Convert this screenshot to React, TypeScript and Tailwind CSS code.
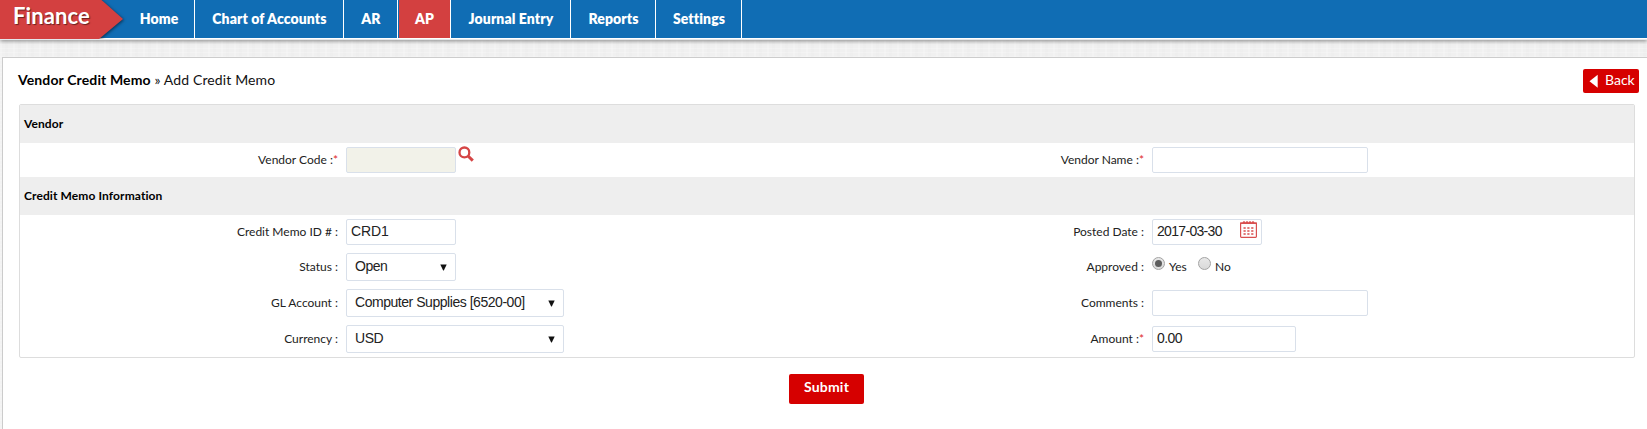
import type { ReactNode } from "react";

const navItems = [
  { label: "Home", width: "w-[72px]" },
  { label: "Chart of Accounts", width: "w-[149px]" },
  { label: "AR", width: "w-[54px]" },
  { label: "AP", width: "w-[53px]", active: true },
  { label: "Journal Entry", width: "w-[120px]" },
  { label: "Reports", width: "w-[85px]" },
  { label: "Settings", width: "w-[86px]" },
];

function Brand() {
  return (
    <div className="relative z-10 h-[39px] w-[123px] shrink-0">
      <svg className="absolute left-0 top-0 overflow-hidden" width="127" height="39">
        <path d="M0 -4H97L123 19L99 39H0Z" fill="#d34040" style={{ filter: "drop-shadow(1px 1px 1.5px rgba(0,0,0,.5))" }} />
      </svg>
      <span className="relative block pl-[13px] text-[22px] leading-[32px] font-bold tracking-[0.1px] text-white [text-shadow:1px_1px_1px_rgba(0,0,0,0.5)]">
        Finance
      </span>
    </div>
  );
}

function Nav() {
  return (
    <header className="relative flex h-[39px] border-b border-white bg-[#106db4] shadow-[0_1px_0_#e4e8ec,0_2px_4px_rgba(0,0,0,0.45)]">
      <Brand />
      {navItems.map((n) => (
        <a
          key={n.label}
          className={`${n.width} flex h-[38px] shrink-0 items-center justify-center border-r border-white pb-px pl-px text-[14px] font-extrabold tracking-[0.1px] whitespace-nowrap text-white ${n.active ? "bg-[#d34040] bg-clip-padding shadow-[inset_1px_0_0_#106db4]" : ""}`}
        >
          {n.label}
        </a>
      ))}
    </header>
  );
}

function Heading({ children }: { children: ReactNode }) {
  return (
    <h2 className="flex h-[38px] items-center bg-[#eeeeee] pb-px pl-1 text-[12px] font-bold tracking-[0.1px] text-black">
      {children}
    </h2>
  );
}

function Field({ label, required, children }: { label: string; required?: boolean; children: ReactNode }) {
  return (
    <div className="flex h-full w-[806px] gap-2">
      <div className="flex w-[318px] items-center justify-end pb-px text-[12px] whitespace-nowrap text-[#222]">
        <span>
          {label} :{required && <span className="text-[#e02b2b]">*</span>}
        </span>
      </div>
      <div className="flex items-start pt-1">{children}</div>
    </div>
  );
}

function Row({ short, children }: { short?: boolean; children: ReactNode }) {
  return <div className={`flex ${short ? "h-[34px]" : "h-9"}`}>{children}</div>;
}

function Input({ value, width, className = "" }: { value?: string; width: string; className?: string }) {
  return (
    <div
      className={`${width} flex h-[26px] items-center rounded-[2px] border border-[#d9e0ea] bg-white pb-0.5 pl-1 font-['Liberation_Sans',sans-serif] text-[14px] text-[#222] ${className}`}
    >
      {value}
    </div>
  );
}

function Select({ value, width }: { value: string; width: string }) {
  return (
    <div
      className={`${width} flex h-7 items-center justify-between rounded-[2px] border border-[#d9e0ea] bg-white pr-2 pb-0.5 pl-2 font-['Liberation_Sans',sans-serif] text-[14px] tracking-[-0.46px] whitespace-nowrap text-[#222]`}
    >
      {value}
      <svg width="7" height="7" viewBox="0 0 7 7" className="mt-0.5">
        <path d="M.3 .5H6.7L3.8 6.5H3.2Z" fill="#111" />
      </svg>
    </div>
  );
}

function SearchIcon() {
  return (
    <svg width="16" height="16" viewBox="0 0 16 16" className="-mt-px ml-0.5" fill="none" stroke="#d54545">
      <circle cx="6.4" cy="6.4" r="4.9" strokeWidth="2.3" />
      <path d="M10 10L14.8 14.6" strokeWidth="3" />
    </svg>
  );
}

function CalendarIcon() {
  return (
    <svg width="17" height="17" viewBox="0 0 17 17" className="mb-1.5">
      <rect x=".6" y="2" width="15.8" height="14.3" rx=".8" fill="#fff" stroke="#d95050" strokeWidth="1.2" />
      <path d="M0 1.5H17V3H0Z" fill="#d95050" />
      {[4, 7, 10, 13].map((x) => (
        <circle key={x} cx={x} cy="1.5" r="1.3" fill="#d95050" />
      ))}
      {[6, 9, 12].map((y) =>
        [3.5, 7.3, 11.2].map((x) => <rect key={`${x}-${y}`} x={x} y={y} width="2.2" height="2" fill="#e27a7a" />),
      )}
    </svg>
  );
}

function Radio({ checked }: { checked?: boolean }) {
  return (
    <span className="flex size-[13px] items-center justify-center rounded-full border border-[#a3a3a3] bg-linear-to-b from-[#e8e8e8] to-[#d9d9d9]">
      {checked && <span className="size-[7px] rounded-full bg-[#5c5c5c]" />}
    </span>
  );
}

export default function App() {
  return (
    <div className="h-[429px] overflow-hidden bg-[#f0f0f0] bg-[repeating-linear-gradient(90deg,rgba(255,255,255,.2)_0_2px,transparent_2px_5px,rgba(0,0,0,.006)_5px_8px,transparent_8px_13px),repeating-linear-gradient(0deg,rgba(255,255,255,.2)_0_1px,transparent_1px_4px)] font-[Lato,sans-serif]">
      <Nav />
      <main className="mt-[18px] ml-[2px] h-[380px] border-t border-l border-[#cccccc] bg-white">
        <div className="flex h-[46px] items-start justify-between pl-[15px]">
          <h1 className="pt-[13px] text-[14px] leading-[18px] tracking-[0.13px] text-[#111]">
            <b className="font-bold text-black">Vendor Credit Memo</b> » Add Credit Memo
          </h1>
          <button className="mt-[11px] mr-2 flex h-6 w-14 items-start rounded-[2px] bg-[#d60000] pl-[6px] text-[14px] leading-[22px] text-white">
            <svg width="9" height="14" viewBox="0 0 9 14" className="mt-[5px] mr-[7px]">
              <path d="M.5 7.3L8.7 .7V13.8Z" fill="#fff" />
            </svg>
            Back
          </button>
        </div>
        <section className="ml-4 h-[254px] w-[1616px] overflow-hidden rounded-[2px] border border-[#dddddd]">
          <Heading>Vendor</Heading>
          <Row short>
            <Field label="Vendor Code" required>
              <Input width="w-[110px]" className="bg-[#f2f2e9]!" />
              <SearchIcon />
            </Field>
            <Field label="Vendor Name" required>
              <Input width="w-[216px]" />
            </Field>
          </Row>
          <Heading>Credit Memo Information</Heading>
          <Row short>
            <Field label="Credit Memo ID #">
              <Input width="w-[110px]" value="CRD1" className="tracking-[-0.1px]" />
            </Field>
            <Field label="Posted Date">
              <div className="flex h-[26px] w-[110px] items-center justify-between rounded-[2px] border border-[#d9e0ea] pr-1 pl-1 font-['Liberation_Sans',sans-serif] text-[14px] tracking-[-0.68px] text-[#222]">
                <span className="pb-0.5">2017-03-30</span>
                <CalendarIcon />
              </div>
            </Field>
          </Row>
          <Row>
            <Field label="Status">
              <Select width="w-[110px]" value="Open" />
            </Field>
            <Field label="Approved">
              <div className="flex pt-1 text-[12px] leading-[20px] text-[#222]">
                <Radio checked />
                <span className="ml-1 w-[29px]">Yes</span>
                <Radio />
                <span className="ml-1">No</span>
              </div>
            </Field>
          </Row>
          <Row>
            <Field label="GL Account">
              <Select width="w-[218px]" value="Computer Supplies [6520-00]" />
            </Field>
            <Field label="Comments">
              <Input width="w-[216px]" className="mt-px" />
            </Field>
          </Row>
          <Row>
            <Field label="Currency">
              <Select width="w-[218px]" value="USD" />
            </Field>
            <Field label="Amount" required>
              <Input width="w-[144px]" value="0.00" className="mt-px tracking-[-0.6px]" />
            </Field>
          </Row>
        </section>
        <button className="mt-4 ml-[786px] block h-[30px] w-[75px] rounded-[2px] bg-[#d60000] pb-1 text-[14px] leading-[26px] font-bold tracking-[0.2px] text-white">
          Submit
        </button>
      </main>
    </div>
  );
}
